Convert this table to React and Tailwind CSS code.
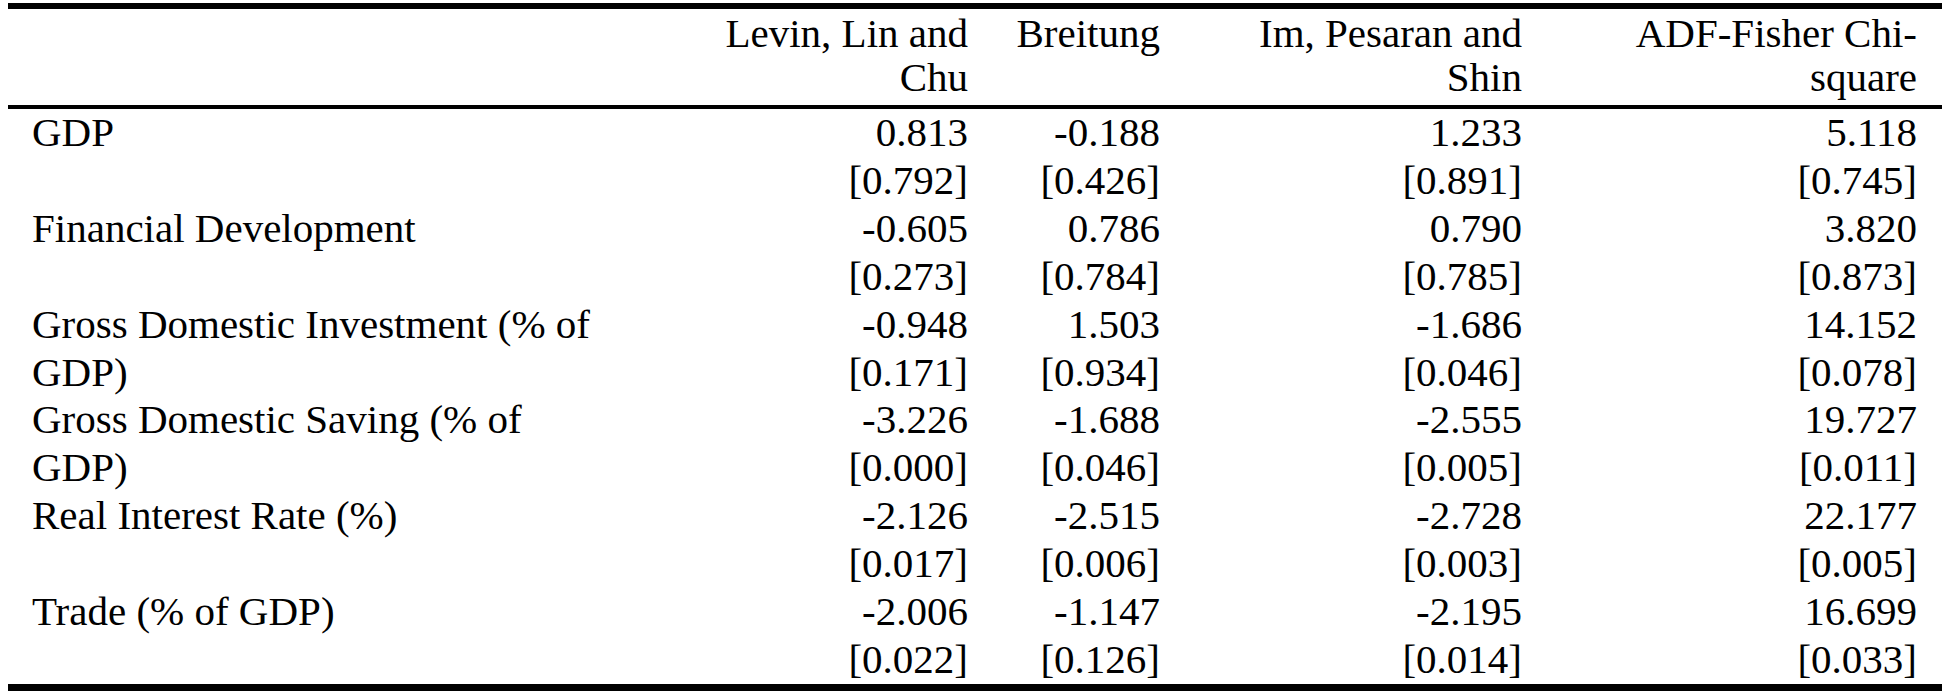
const rows = [
  { label: "GDP", vals: ["0.813", "-0.188", "1.233", "5.118"] },
  { label: "", vals: ["[0.792]", "[0.426]", "[0.891]", "[0.745]"] },
  { label: "Financial Development", vals: ["-0.605", "0.786", "0.790", "3.820"] },
  { label: "", vals: ["[0.273]", "[0.784]", "[0.785]", "[0.873]"] },
  { label: "Gross Domestic Investment (% of", vals: ["-0.948", "1.503", "-1.686", "14.152"] },
  { label: "GDP)", vals: ["[0.171]", "[0.934]", "[0.046]", "[0.078]"] },
  { label: "Gross Domestic Saving (% of", vals: ["-3.226", "-1.688", "-2.555", "19.727"] },
  { label: "GDP)", vals: ["[0.000]", "[0.046]", "[0.005]", "[0.011]"] },
  { label: "Real Interest Rate (%)", vals: ["-2.126", "-2.515", "-2.728", "22.177"] },
  { label: "", vals: ["[0.017]", "[0.006]", "[0.003]", "[0.005]"] },
  { label: "Trade (% of GDP)", vals: ["-2.006", "-1.147", "-2.195", "16.699"] },
  { label: "", vals: ["[0.022]", "[0.126]", "[0.014]", "[0.033]"] },
];

// column widths taken from the reference rules / right edges
const grid = "grid grid-cols-[710px_259px_192px_362px_411px]";
const pads = ["pr-[9px]", "pr-[9px]", "pr-[9px]", "pr-[25px]"];

const HeadCell = ({ lines, pad }) => (
  <div className={`text-right ${pad}`}>
    {lines.map((l, i) => (
      <div key={i}>{l}</div>
    ))}
  </div>
);

export default function App() {
  return (
    <div className="min-h-[691px] w-[1957px] bg-white pt-[3px] pl-[8px] text-black font-[Liberation_Serif,serif] text-[41px]">
      <div className="w-[1934px]">
        <div className="h-[6px] bg-black" />
        <div className={`${grid} pt-[2px] pb-[6px] leading-[44px]`}>
          <div />
          <HeadCell lines={["Levin, Lin and", "Chu"]} pad={pads[0]} />
          <HeadCell lines={["Breitung"]} pad={pads[1]} />
          <HeadCell lines={["Im, Pesaran and", "Shin"]} pad={pads[2]} />
          <HeadCell lines={["ADF-Fisher Chi-", "square"]} pad={pads[3]} />
        </div>
        <div className="h-[4px] bg-black" />
        <div className="leading-[47.9px]">
          {rows.map((r, i) => (
            <div key={i} className={grid}>
              <div className="pl-[24px] whitespace-nowrap">{r.label}</div>
              {r.vals.map((v, j) => (
                <div key={j} className={`text-right ${pads[j]}`}>
                  {v}
                </div>
              ))}
            </div>
          ))}
        </div>
        <div className="h-[7px] bg-black" />
      </div>
    </div>
  );
}
